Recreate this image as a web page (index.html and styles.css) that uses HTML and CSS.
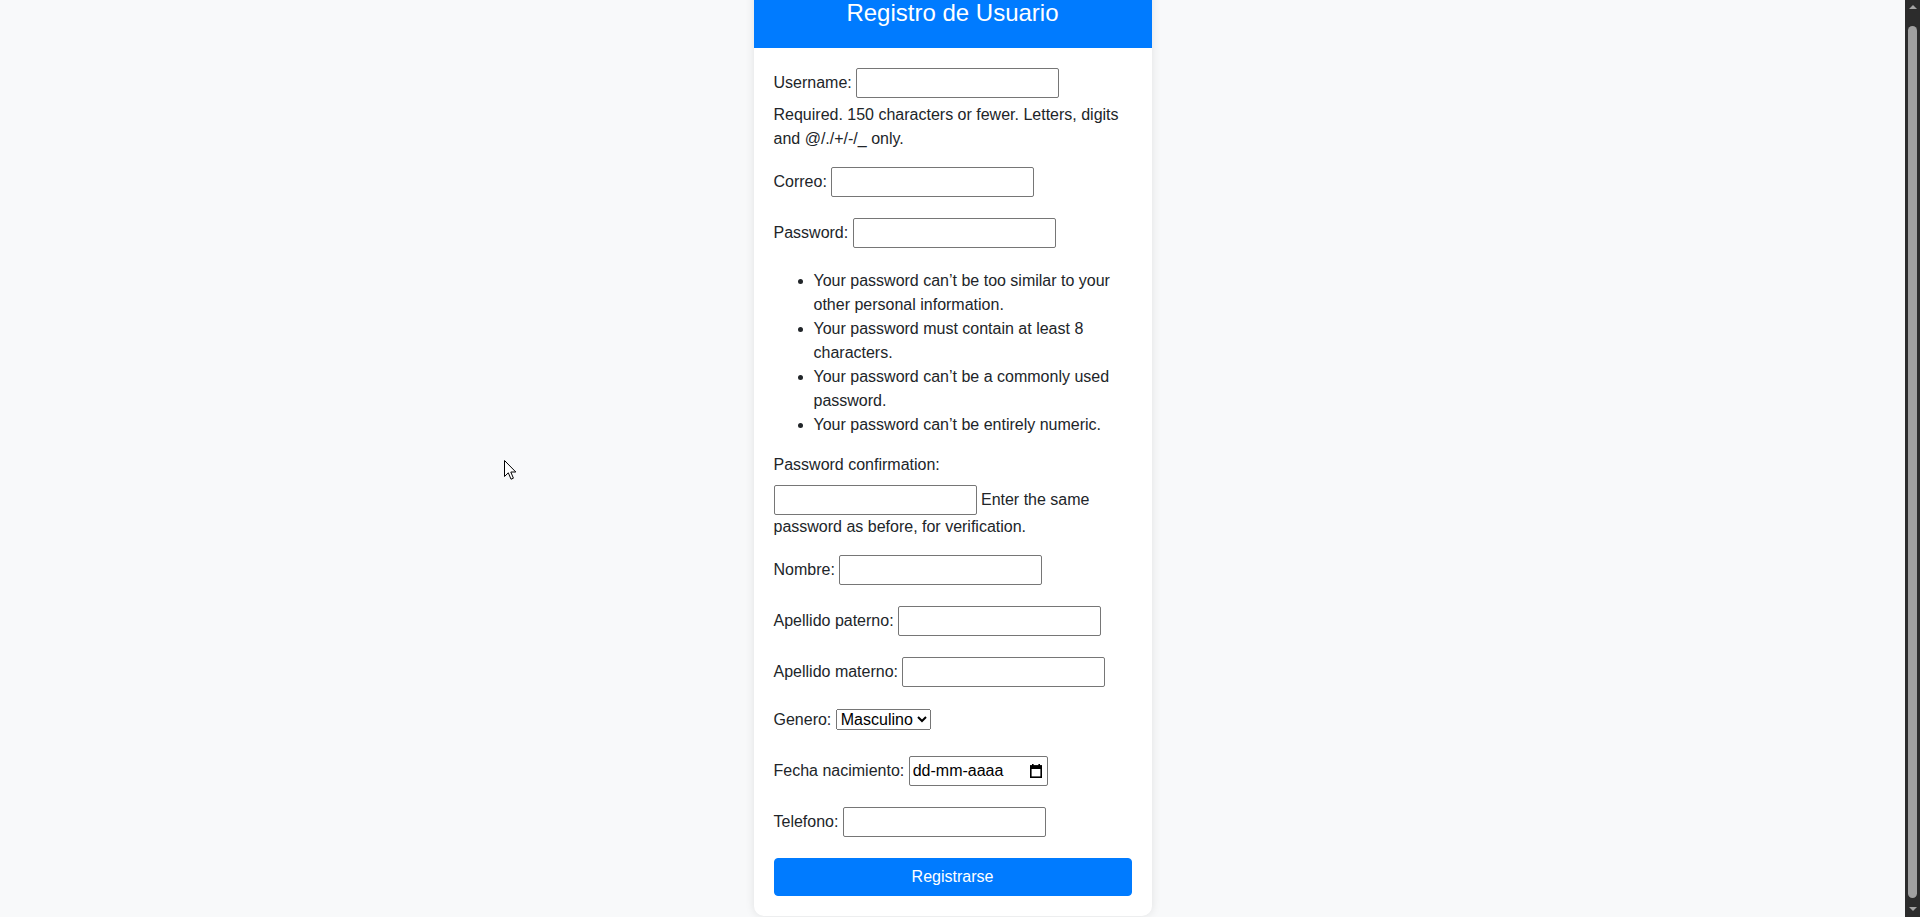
FILE: index.html
```html
<!DOCTYPE html>
<html lang="es">
<head>
<meta charset="utf-8">
<title>Registro de Usuario</title>
<link rel="stylesheet" href="styles.css">
</head>
<body>
<main class="page">
  <div class="card">
    <div class="card-header">
      <h2 class="title">Registro de Usuario</h2>
    </div>
    <form class="card-body" onsubmit="return false;">
      <p><label class="field-label" for="id_username">Username:</label> <input class="field" type="text" id="id_username"> <span class="helptext">Required. 150 characters or fewer. Letters, digits and @/./+/-/_ only.</span></p>
      <p><label class="field-label" for="id_email">Correo:</label> <input class="field" type="email" id="id_email"></p>
      <p><label class="field-label" for="id_password1">Password:</label> <input class="field" type="password" id="id_password1"></p>
      <ul class="helplist">
        <li>Your password can’t be too similar to your other personal information.</li>
        <li>Your password must contain at least 8 characters.</li>
        <li>Your password can’t be a commonly used password.</li>
        <li>Your password can’t be entirely numeric.</li>
      </ul>
      <p><label class="field-label" for="id_password2">Password confirmation:</label> <input class="field" type="password" id="id_password2"> <span class="helptext">Enter the same password as before, for verification.</span></p>
      <p><label class="field-label" for="id_nombre">Nombre:</label> <input class="field" type="text" id="id_nombre"></p>
      <p><label class="field-label" for="id_ap_paterno">Apellido paterno:</label> <input class="field" type="text" id="id_ap_paterno"></p>
      <p><label class="field-label" for="id_ap_materno">Apellido materno:</label> <input class="field" type="text" id="id_ap_materno"></p>
      <p><label class="field-label" for="id_genero">Genero:</label> <select class="select" id="id_genero"><option>Masculino</option><option>Femenino</option></select></p>
      <p><label class="field-label" for="id_fecha">Fecha nacimiento:</label> <span class="date-field" id="id_fecha"><span class="date-text">dd-mm-aaaa</span><svg class="cal-icon" width="12" height="14" viewBox="0 0 12 14" aria-hidden="true"><rect x="2" y="0" width="1.6" height="3" fill="#000"/><rect x="8.4" y="0" width="1.6" height="3" fill="#000"/><rect x="0.8" y="2" width="10.4" height="11.2" fill="none" stroke="#000" stroke-width="1.6"/><rect x="0" y="1.5" width="12" height="3.5" fill="#000"/></svg></span></p>
      <p><label class="field-label" for="id_telefono">Telefono:</label> <input class="field" type="tel" id="id_telefono"></p>
      <button class="btn" type="submit">Registrarse</button>
    </form>
  </div>
</main>
<div class="scrollbar" aria-hidden="true"><span class="sb-up"></span><span class="sb-thumb"></span><span class="sb-down"></span></div>
<svg class="cursor" width="13" height="21" viewBox="0 0 13 21" aria-hidden="true"><path d="M0.5 0.5 L0.5 16.5 L4.3 12.8 L7 19.2 L9.4 18.2 L6.8 12 L11.8 12 Z" fill="#fff" stroke="#000" stroke-width="1" stroke-linejoin="miter"/></svg>
<script src="script.js"></script>
</body>
</html>
```
FILE: styles.css
```css
*, *::before, *::after {
  box-sizing: border-box;
}

html {
  scrollbar-width: none;
}

html::-webkit-scrollbar {
  display: none;
}

body {
  margin: 0;
  background: #f8f9fa;
  color: #212529;
  font-family: Arial, "Liberation Sans", sans-serif;
  font-size: 16px;
  line-height: 1.5;
}

.page {
  padding: 10px 15px 1px 0;
}

.card {
  width: 398px;
  margin: 0 auto;
  background: #fff;
  border-radius: 10px;
  box-shadow: 0 0 10px rgba(0, 0, 0, 0.1);
  overflow: hidden;
}

.card-header {
  background: #007bff;
  color: #fff;
  padding: 20px;
  text-align: center;
}

.title {
  margin: 0;
  font-size: 24px;
  font-weight: 400;
  line-height: 1.2;
}

.card-body {
  display: block;
  padding: 20px;
  margin: 0;
}

.card-body p {
  margin: 0 0 16px;
}

.field-label {
  display: inline-block;
  margin-bottom: 8px;
}

.field {
  width: 203px;
  height: 30px;
  margin: 0;
  padding: 2px 3px;
  border: 1px solid #767676;
  border-radius: 2px;
  background: #fff;
  color: #000;
  font: inherit;
  line-height: 24px;
  vertical-align: baseline;
}

.helplist {
  margin: 0 0 16px;
  padding-left: 40px;
}

.select {
  margin: 0;
  font-family: inherit;
  font-size: 16px;
  line-height: normal;
  color: #000;
}

.date-field {
  display: inline-flex;
  align-items: center;
  justify-content: space-between;
  width: 139px;
  height: 30px;
  padding: 2px 5px 2px 3px;
  border: 1px solid #767676;
  border-radius: 2px;
  background: #fff;
  color: #000;
  vertical-align: baseline;
}

.date-text {
  line-height: 24px;
}

.cal-icon {
  display: block;
  flex: none;
}

.btn {
  display: block;
  width: 100%;
  margin: 0;
  padding: 6px 12px;
  border: 1px solid #007bff;
  border-radius: 4px;
  background: #007bff;
  color: #fff;
  font: inherit;
  line-height: 1.5;
  text-align: center;
  cursor: pointer;
}

.scrollbar {
  position: fixed;
  top: 0;
  right: 0;
  width: 15px;
  height: 100vh;
  background: #2c2c2c;
  display: flex;
  flex-direction: column;
  align-items: center;
  padding: 5px 0 6px;
}

.sb-up {
  width: 0;
  height: 0;
  border-left: 4px solid transparent;
  border-right: 4px solid transparent;
  border-bottom: 4px solid #a3a3a3;
}

.sb-down {
  width: 0;
  height: 0;
  border-left: 4px solid transparent;
  border-right: 4px solid transparent;
  border-top: 4px solid #a3a3a3;
}

.sb-thumb {
  flex: 1;
  width: 9px;
  margin: 17px 0 9px;
  border-radius: 5px;
  background: #a0a0a0;
}

.cursor {
  position: fixed;
  left: 504px;
  top: 460px;
  pointer-events: none;
}
```
FILE: script.js
```js
function scrollToBottom() {
  window.scrollTo(0, document.documentElement.scrollHeight);
}
scrollToBottom();
window.addEventListener('load', scrollToBottom);
```
